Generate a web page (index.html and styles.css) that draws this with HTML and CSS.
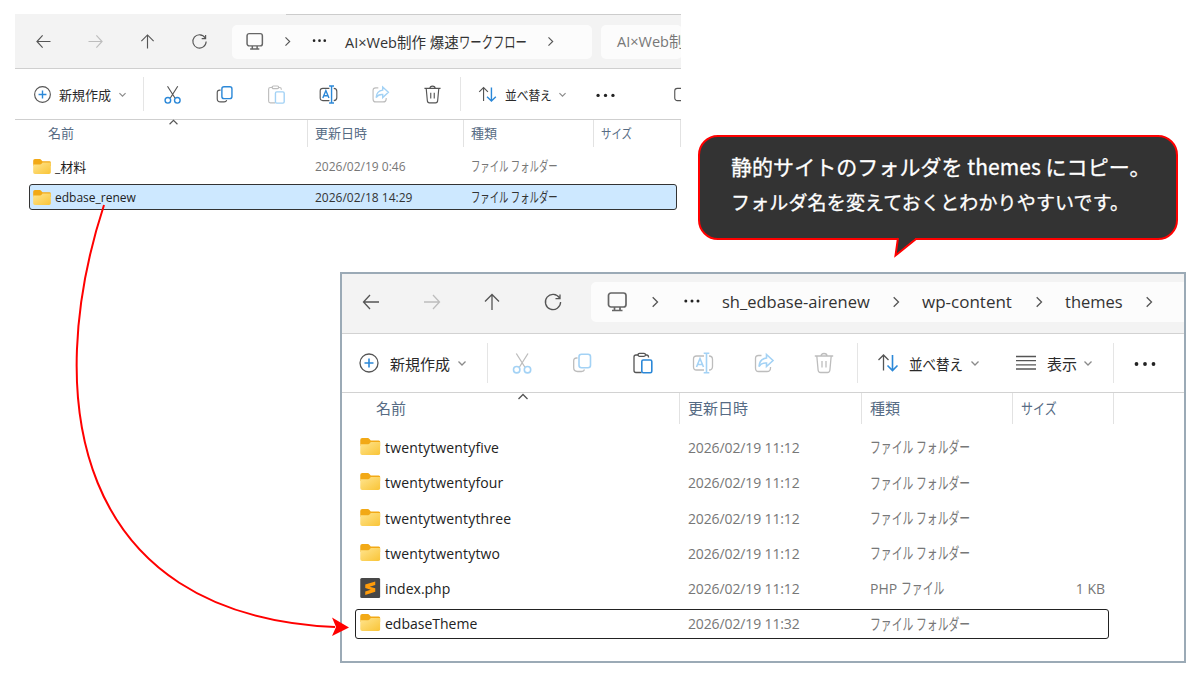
FILE: index.html
```
<!DOCTYPE html>
<html lang="ja">
<head>
<meta charset="utf-8">
<title>themes フォルダへのコピー</title>
<link rel="stylesheet" href="styles.css">
</head>
<body>
<svg class="defs" width="0" height="0">
  <defs>
    <linearGradient id="fold" x1="0" y1="0" x2="1" y2="1"><stop offset="0" stop-color="#ffe590"/><stop offset="1" stop-color="#f9c436"/></linearGradient>
    <symbol id="back" viewBox="0 0 24 24"><path d="M20 12H4.500M11 5L4.500 12l6.500 7"/></symbol>
    <symbol id="fwd" viewBox="0 0 24 24"><path d="M4 12h15.500M13 5L19.500 12 13 19"/></symbol>
    <symbol id="up" viewBox="0 0 24 24"><path d="M12 20V4.500M5 11.500L12 4.500l7 7"/></symbol>
    <symbol id="reload" viewBox="0 0 24 24"><path d="M18.500 8A7.600 7.600 0 1 0 19.600 12M19 4.500V8.700H14.500"/></symbol>
    <symbol id="pc" viewBox="0 0 24 24"><rect x="3.500" y="3" width="17.500" height="14" rx="2.500"/><path d="M9.500 17v3M15 17v3M7 20.500h10.500"/></symbol>
    <symbol id="chev" viewBox="0 0 24 24"><path d="M9.700 7.300L14.500 12l-4.800 4.700"/></symbol>
    <symbol id="down" viewBox="0 0 24 24"><path d="M8.500 10.500L12 14l3.500-3.500"/></symbol>
    <symbol id="sortup" viewBox="0 0 24 24"><path d="M7.500 14L12 9.500l4.500 4.500"/></symbol>
    <symbol id="dots" viewBox="0 0 24 24"><g fill="currentColor" stroke="none"><circle cx="5.800" cy="11" r="1.500"/><circle cx="12" cy="11" r="1.500"/><circle cx="18" cy="11" r="1.500"/></g></symbol>
    <symbol id="more" viewBox="0 0 24 24"><g fill="currentColor" stroke="none"><circle cx="3.500" cy="13" r="1.900"/><circle cx="12" cy="13" r="1.900"/><circle cx="20.500" cy="13" r="1.900"/></g></symbol>
    <symbol id="plus" viewBox="0 0 24 24"><circle cx="12" cy="12" r="9"/><path class="b" d="M12 7.500v9M7.500 12h9"/></symbol>
    <symbol id="cut" viewBox="0 0 24 24"><path d="M6.300 2.500l8.500 13.500M18 2.500L9.500 16"/><g class="b"><circle cx="6.700" cy="18.700" r="3.200"/><circle cx="17.500" cy="18.700" r="3.200"/></g></symbol>
    <symbol id="copy" viewBox="0 0 24 24"><path d="M7.500 7H6.500Q3.700 7 3.700 9.800v7Q3.700 20.500 7.500 20.500H11.500Q14 20.500 14.500 18.500"/><rect class="b" x="9" y="3.200" width="11.500" height="13.500" rx="2.500"/></symbol>
    <symbol id="paste" viewBox="0 0 24 24"><path d="M10.500 21.500H5Q3 21.500 3 19.500V6Q3 4 5 4H7.500M14.500 4h1Q17.500 4 17.500 6V6.500"/><rect x="7" y="2.300" width="7.500" height="3" rx="1.500"/><rect class="b" x="10.800" y="9" width="10" height="12.800" rx="1.500"/></symbol>
    <symbol id="rename" viewBox="0 0 24 24"><path d="M13 19H5.500Q2.500 19 2.500 16V8Q2.500 5 5.500 5H13M18 5Q21.500 5 21.500 8.500V15.500Q21.500 19 18 19"/><path class="b" d="M5.500 16L9 7.500 12.500 16M7 13.500h4M15.500 2.500v19M12.700 2.300h5.600M12.700 21.700h5.600"/></symbol>
    <symbol id="share" viewBox="0 0 24 24"><path d="M9.500 4.500H6.500Q3.500 4.500 3.500 7.500V17Q3.500 20.500 6.500 20.500H15Q18.500 20.500 18.500 17V16"/><path class="b" d="M14.500 3.500L21 9.500 14.500 15.500V12Q9.500 11.500 7 15.500 7.500 8 14.500 7z"/></symbol>
    <symbol id="trash" viewBox="0 0 24 24"><path d="M2.800 5h18.400M9 5Q9 2.500 12 2.500T15 5M4.800 5l1.300 14Q6.300 21.500 8.500 21.500h7Q17.700 21.500 17.900 19L19.200 5M10 10v6.500M14 10v6.500"/></symbol>
    <symbol id="sort" viewBox="0 0 24 24"><path d="M7.500 19.500V4M2.500 9l5-5 5 5"/><path class="b" d="M16.500 4v15.500M11.500 14.500l5 5 5-5"/></symbol>
    <symbol id="list" viewBox="0 0 24 24"><path d="M2 5.500h20M2 9.700h20M2 13.900h20M2 18h20"/></symbol>
    <symbol id="panel" viewBox="0 0 24 24"><rect x="2" y="5" width="19" height="14" rx="3"/></symbol>
    <symbol id="folder" viewBox="0 0 20 17"><path d="M0 2Q0 0 2 0H7.500Q8.500 0 9.200 1L10.500 2.500H18.500Q20 2.500 20 4V8H0z" fill="#f2a916"/><path d="M0 6.200H7.800Q8.800 6.200 9.500 5.300L10.600 4H20V15Q20 17 18 17H2Q0 17 0 15z" fill="url(#fold)"/></symbol>
    <symbol id="subl" viewBox="0 0 20 20"><rect width="20" height="20" rx="1.500" fill="#474747"/><path d="M5 6.500L15 3.500V7L9.500 8.700 15 10.300V13.800L5 17V13.500L10.500 11.700 5 10z" fill="#ff9c0a"/></symbol>
  </defs>
</svg>

<section class="win source">
  <div class="nav">
    <svg class="i"><use href="#back"/></svg>
    <svg class="i off"><use href="#fwd"/></svg>
    <svg class="i"><use href="#up"/></svg>
    <svg class="i"><use href="#reload"/></svg>
    <div class="address">
      <svg class="i thick"><use href="#pc"/></svg>
      <svg class="i"><use href="#chev"/></svg>
      <svg class="i dark"><use href="#dots"/></svg>
      <span class="crumb">AI×Web<span class="kanji">制作 爆速</span><span class="kana">ワークフロー</span></span>
      <svg class="i"><use href="#chev"/></svg>
    </div>
    <div class="search">AI×Web<span class="kanji">制</span></div>
  </div>
  <div class="tools">
    <svg class="i"><use href="#plus"/></svg><span>新規作成</span><svg class="i dim"><use href="#down"/></svg>
    <i class="sep"></i>
    <svg class="i"><use href="#cut"/></svg>
    <svg class="i"><use href="#copy"/></svg>
    <svg class="i off"><use href="#paste"/></svg>
    <svg class="i"><use href="#rename"/></svg>
    <svg class="i off"><use href="#share"/></svg>
    <svg class="i"><use href="#trash"/></svg>
    <i class="sep"></i>
    <svg class="i"><use href="#sort"/></svg><span class="order">並べ替え</span><svg class="i dim"><use href="#down"/></svg>
    <svg class="i dark"><use href="#more"/></svg>
    <svg class="i"><use href="#panel"/></svg>
  </div>
  <div class="head">
    <span class="first">名前<svg class="i asc"><use href="#sortup"/></svg></span><span>更新日時</span><span>種類</span><span><b class="size">サイズ</b></span><span></span>
  </div>
  <div class="row"><svg class="f"><use href="#folder"/></svg><span class="name">_<span class="kanji">材料</span></span><span>2026/02/19 0:46</span><span class="kana">ファイル フォルダー</span></div>
  <div class="row selected"><svg class="f"><use href="#folder"/></svg><span class="name">edbase_renew</span><span>2026/02/18 14:29</span><span class="kana">ファイル フォルダー</span></div>
</section>

<section class="win target">
  <div class="nav">
    <svg class="i"><use href="#back"/></svg>
    <svg class="i off"><use href="#fwd"/></svg>
    <svg class="i"><use href="#up"/></svg>
    <svg class="i"><use href="#reload"/></svg>
    <div class="address">
      <svg class="i thick"><use href="#pc"/></svg>
      <svg class="i"><use href="#chev"/></svg>
      <svg class="i dark"><use href="#dots"/></svg>
      <span class="crumb">sh_edbase-airenew</span>
      <svg class="i"><use href="#chev"/></svg>
      <span class="crumb wide">wp-content</span>
      <svg class="i"><use href="#chev"/></svg>
      <span class="crumb">themes</span>
      <svg class="i"><use href="#chev"/></svg>
    </div>
  </div>
  <div class="tools">
    <svg class="i"><use href="#plus"/></svg><span>新規作成</span><svg class="i dim"><use href="#down"/></svg>
    <i class="sep"></i>
    <svg class="i off"><use href="#cut"/></svg>
    <svg class="i off"><use href="#copy"/></svg>
    <svg class="i"><use href="#paste"/></svg>
    <svg class="i off"><use href="#rename"/></svg>
    <svg class="i off"><use href="#share"/></svg>
    <svg class="i off"><use href="#trash"/></svg>
    <i class="sep"></i>
    <svg class="i"><use href="#sort"/></svg><span class="order">並べ替え</span><svg class="i dim"><use href="#down"/></svg>
    <svg class="i"><use href="#list"/></svg><span>表示</span><svg class="i dim"><use href="#down"/></svg>
    <i class="sep"></i>
    <svg class="i dark"><use href="#more"/></svg>
  </div>
  <div class="head">
    <span class="first">名前<svg class="i asc"><use href="#sortup"/></svg></span><span>更新日時</span><span>種類</span><span><b class="size">サイズ</b></span><span></span>
  </div>
  <div class="row"><svg class="f"><use href="#folder"/></svg><span class="name">twentytwentyfive</span><span class="date">2026/02/19 11:12</span><span class="kana">ファイル フォルダー</span></div>
  <div class="row"><svg class="f"><use href="#folder"/></svg><span class="name">twentytwentyfour</span><span class="date">2026/02/19 11:12</span><span class="kana">ファイル フォルダー</span></div>
  <div class="row"><svg class="f"><use href="#folder"/></svg><span class="name">twentytwentythree</span><span class="date">2026/02/19 11:12</span><span class="kana">ファイル フォルダー</span></div>
  <div class="row"><svg class="f"><use href="#folder"/></svg><span class="name">twentytwentytwo</span><span class="date">2026/02/19 11:12</span><span class="kana">ファイル フォルダー</span></div>
  <div class="row"><svg class="f app"><use href="#subl"/></svg><span class="name plain">index.php</span><span class="date">2026/02/19 11:12</span><span class="kind">PHP <span class="kana">ファイル</span></span><span class="bytes">1 KB</span></div>
  <div class="row selected"><svg class="f"><use href="#folder"/></svg><span class="name plain">edbaseTheme</span><span class="date">2026/02/19 11:32</span><span class="kana">ファイル フォルダー</span></div>
</section>

<aside class="bubble">
  <p class="lead">静的サイトのフォルダを themes にコピー。</p>
  <p class="note">フォルダ名を変えておくとわかりやすいです。</p>
  <svg class="tail" width="26" height="22" viewBox="0 0 26 22"><path d="M4 0V2L1.500 18.500 21 2V0z" fill="#333"/><path d="M4 1L1.500 18.500 22 2" fill="none" stroke="#f00" stroke-width="2"/></svg>
</aside>

<svg class="arrow" width="1200" height="675" viewBox="0 0 1200 675"><path d="M104 205C42 395 72 615 335 627" fill="none" stroke="#f00" stroke-width="2"/><path d="M349 627.500L332 617.500 336 627 332 636z" fill="#f00"/></svg>
</body>
</html>
```
FILE: styles.css
```
body { margin: 0; width: 1200px; height: 675px; position: relative; overflow: hidden; background: #fff; font-family: "Open Sans", "Noto Sans CJK JP", sans-serif; }
.defs { position: absolute; }
.win { position: absolute; box-sizing: border-box; overflow: hidden; background: #fff; color: #2a2a2a; white-space: nowrap; }
.source { left: 15px; top: 14px; width: 666px; height: 200px; font-size: 12px; --icon: 21px; --kanji: 13px; --kana: 14px; --line: #cfcfcf; }
.target { left: 340px; top: 272px; width: 846px; height: 391px; border: 2px solid #9baab6; font-size: 14px; --icon: 24px; --kanji: 15px; --kana: 16.2px; --line: #d2d2d2; }

.i { display: block; width: var(--icon); height: var(--icon); flex: none; fill: none; stroke: currentColor; stroke-width: 1.3; color: #555; --accent: #2b88d8; }
.b { stroke: var(--accent); stroke-width: 1.6; }
.i.off { color: #bdbdbd; --accent: #a3d2f5; }
.i.dim { color: #8a8a8a; }
.i.dark { color: #222; }
.i.thick { stroke-width: 1.7; color: #666; }
.kanji { font-size: var(--kanji); }
.kana { display: inline-block; font-size: var(--kana); line-height: 1; transform: scaleX(.668); transform-origin: left; }

.nav, .tools, .address, .row { display: grid; align-items: center; }
.nav { background: #f3f3f3; border-bottom: 1px solid var(--line); box-sizing: border-box; }
.address, .search { background: #fcfcfc; border-radius: 5px; box-sizing: border-box; }
.crumb { color: #333; }
.tools { border-bottom: 1px solid var(--line); box-sizing: border-box; font-size: var(--kanji); }
.sep { width: 1px; background: #e5e5e5; }
.order { transform: scaleX(.9); transform-origin: left; }
.head { display: grid; color: #566b84; font-size: var(--kanji); }
.head span { border-left: 1px solid #e2e2e2; box-sizing: border-box; position: relative; }
.head .first { border: 0; }
.asc { position: absolute; }
.size { display: inline-block; font-weight: normal; transform: scaleX(.8); transform-origin: left; }
.row { box-sizing: border-box; color: #777; border: 1px solid transparent; border-radius: 3px; }
.name { color: #222; }

.source .nav { height: 55px; padding: 1px 0 0 17.5px; grid-template-columns: 52px 52px 52px 43.5px 360px 90px; background: linear-gradient(#ccc, #ccc) 271px 0 / 395px 1px no-repeat #f3f3f3; }
.source .address { height: 34px; padding-left: 12px; grid-template-columns: 32.5px 32px 36.5px 194.5px auto; justify-content: start; font-size: 14.5px; --kanji: 14.5px; --kana: 15.5px; }
.source .crumb .kana { transform: scaleX(.73); }
.source .search { height: 34px; margin-left: 9px; padding-left: 16px; line-height: 34px; font-size: 14.5px; --kanji: 14.5px; color: #777; }
.source .tools { height: 51px; padding-left: 16.5px; grid-template-columns: 27.5px 52.5px 31.5px 18.5px 52px 52px 52px 52px 52px 38.5px 16.5px 28.5px 46.5px 43px 78.5px 30px; }
.source .sep { height: 34px; }
.source .head { height: 27px; line-height: 27px; grid-template-columns: 292px 156px 130px 87px 1px; }
.source .head span { padding-left: 7px; }
.source .head .first { padding-left: 33px; }
.source .asc { left: 148px; top: -8px; }
.source .row { height: 26px; margin: 6px 4px 0 14px; padding-left: 3px; grid-template-columns: 22px 260px 156px auto; justify-content: start; }
.source .row.selected { margin-top: 5px; background: #cde8ff; border-color: #333; color: #333; }
.f { width: 18px; height: 15px; }

.target .nav { height: 60px; padding: 0 0 4px 17px; grid-template-columns: 60.5px 60px 61px 50.5px 1fr; }
.target .address { height: 40px; padding-left: 14px; grid-template-columns: 38px 37px 42px 162px 38px 105px 38px 72px 24px; border-radius: 5px 0 0 5px; font-size: 16.5px; }
.target .wide { font-size: 17px; }
.target .tools { height: 59px; padding-left: 15px; grid-template-columns: 33px 60px 37px 22.5px 60.5px 61px 60px 61px 60px 45px 19px 33px 54px 51px 33px 29px 37px 20px 24px; }
.target .sep { height: 40px; }
.target .head { height: 31px; line-height: 31px; grid-template-columns: 337px 182px 151px 101px 1px; }
.target .head span { padding-left: 8px; }
.target .head .first { padding-left: 34px; }
.target .asc { left: 169px; top: -8px; }
.target .row { height: 30px; margin: 5.3px 75px 0 13px; padding-left: 4px; grid-template-columns: 25px 303px 182px 175px 60px; justify-content: start; }
.target .head + .row { margin-top: 8.5px; }
.target .f { width: 20.5px; height: 17px; margin-top: -2px; }
.target .f.app { height: 20px; }
.target .row.selected { border-color: #222; }
.target .name { letter-spacing: .15px; }
.target .name.plain { letter-spacing: 0; }
.target .date { letter-spacing: -.13px; }
.bytes { text-align: right; }

.bubble { position: absolute; left: 698px; top: 135px; width: 480px; height: 105px; box-sizing: border-box; border: 2px solid #f00; border-radius: 20px; background: #333; color: #fff; padding: 13px 0 0 31px; font-family: "Noto Sans CJK JP", sans-serif; white-space: nowrap; -webkit-text-stroke: .3px #fff; }
.bubble p { margin: 0; }
.lead { font-size: 21px; line-height: 32px; letter-spacing: .05px; }
.note { font-size: 19px; line-height: 39px; letter-spacing: .15px; }
.tail { position: absolute; left: 194px; top: 100px; }
.arrow { position: absolute; left: 0; top: 0; }
```
